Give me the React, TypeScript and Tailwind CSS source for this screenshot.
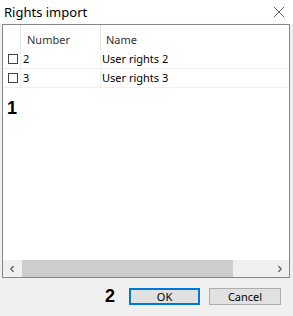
import { X, ChevronLeft, ChevronRight } from 'lucide-react';

const rows = [
  { num: '2', name: 'User rights 2' },
  { num: '3', name: 'User rights 3' },
];

export default function App() {
  return (
    <div
      className="w-[293px] h-[316px] flex flex-col bg-[#f0f0f0] text-[#000] overflow-hidden"
      style={{ fontFamily: '"Noto Sans", "Open Sans", sans-serif' }}
    >
      <div className="h-[24px] shrink-0 bg-white flex items-center justify-between pl-[4px] pr-[4px]">
        <span className="text-[13px] leading-none">Rights import</span>
        <X size={20} strokeWidth={0.8} className="text-[#111]" />
      </div>

      <div className="ml-[2px] mr-[3px] h-[254px] shrink-0 border border-[#828790] bg-white flex flex-col">
        <div className="h-[25px] shrink-0 flex text-[11px] text-[#333]">
          <div className="w-[18px] border-r border-[#e5e5e5]" />
          <div className="w-[80px] border-r border-[#e5e5e5] flex items-center pl-[6px] pt-[6px]">Number</div>
          <div className="flex-1 flex items-center pl-[5px] pt-[6px]">Name</div>
        </div>

        {rows.map((r) => (
          <div key={r.num} className="h-[19px] shrink-0 flex items-center text-[11px] border-b border-[#f0f0f0]">
            <div className="w-[18px] h-full flex items-center justify-center border-r border-[#f0f0f0]">
              <div className="w-[10px] h-[10px] border border-[#444] bg-white ml-[2px]" />
            </div>
            <div className="w-[80px] h-full flex items-center pl-[2px] border-r border-[#f0f0f0]">{r.num}</div>
            <div className="flex-1 pl-[1px]">{r.name}</div>
          </div>
        ))}

        <div className="flex-1 pl-[4px] pt-[8px]">
          <span className="text-[18px] font-bold leading-none" style={{ fontFamily: '"Liberation Sans", Arial, sans-serif' }}>1</span>
        </div>

        <div className="h-[17px] shrink-0 bg-[#f0f0f0] flex items-center">
          <div className="w-[18px] flex items-center justify-center text-[#606060]">
            <ChevronLeft size={10} strokeWidth={3} />
          </div>
          <div className="w-[211px] h-full bg-[#cdcdcd] ml-[1px]" />
          <div className="flex-1" />
          <div className="w-[18px] flex items-center justify-center text-[#606060]">
            <ChevronRight size={10} strokeWidth={3} />
          </div>
        </div>
      </div>

      <div className="flex-1 flex items-start justify-end pt-[10px] pr-[12px] gap-[9px]">
        <span
          className="text-[18px] font-bold leading-none mt-[-1px] mr-[5px]"
          style={{ fontFamily: '"Liberation Sans", Arial, sans-serif' }}
        >
          2
        </span>
        <button className="w-[71px] h-[17px] bg-[#e1e1e1] border-2 border-[#0078d7] text-[11px] leading-none flex items-center justify-center">
          OK
        </button>
        <button className="w-[72px] h-[17px] bg-[#e1e1e1] border border-[#adadad] text-[11px] leading-none flex items-center justify-center">
          Cancel
        </button>
      </div>
    </div>
  );
}
